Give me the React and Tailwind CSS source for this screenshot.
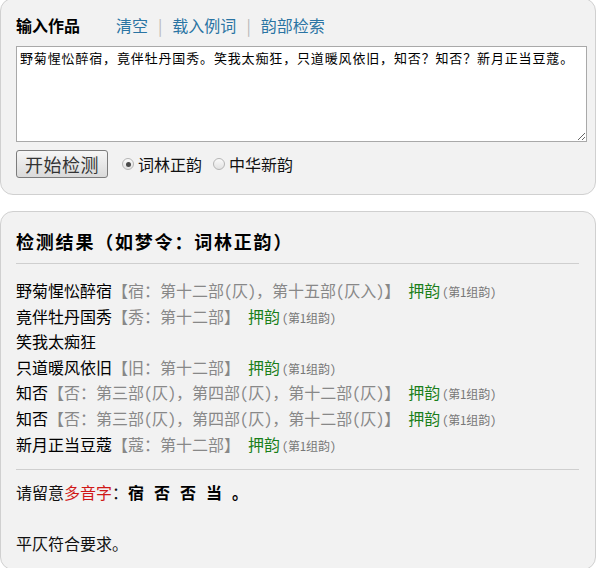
const rows = [
  { line: "野菊惺忪醉宿", note: "宿：第十二部(仄)，第十五部(仄入)", rhyme: true },
  { line: "竟伴牡丹国秀", note: "秀：第十二部", rhyme: true },
  { line: "笑我太痴狂" },
  { line: "只道暖风依旧", note: "旧：第十二部", rhyme: true },
  { line: "知否", note: "否：第三部(仄)，第四部(仄)，第十二部(仄)", rhyme: true },
  { line: "知否", note: "否：第三部(仄)，第四部(仄)，第十二部(仄)", rhyme: true },
  { line: "新月正当豆蔻", note: "蔻：第十二部", rhyme: true },
];

const poem =
  "野菊惺忪醉宿，竟伴牡丹国秀。笑我太痴狂，只道暖风依旧，知否？知否？新月正当豆蔻。";

// ASCII parens get half-width glyphs, the rest keeps full-width punctuation
const Half = ({ text }) =>
  text.split(/([()])/).map((part, i) =>
    part === "(" || part === ")" ? (
      <span key={i} className="[font-feature-settings:'hwid']">
        {part}
      </span>
    ) : (
      part
    )
  );

const Radio = ({ checked, label }) => (
  <label className="flex items-center gap-[4px]">
    <span className="w-[12px] h-[12px] rounded-full border border-[#b5b5b5] bg-gradient-to-b from-[#fafafa] to-[#e2e2e2] flex items-center justify-center">
      {checked && <span className="w-[5px] h-[5px] rounded-full bg-[#4a4a4a]"></span>}
    </span>
    <span className="text-[16px] text-[#111]">{label}</span>
  </label>
);

const App = () => {
  return (
    <div className="bg-white min-h-[568px] overflow-hidden pr-[1px] text-[#111] font-['Noto_Sans_CJK_SC',sans-serif]">
      <div className="-mt-[2px] bg-[#f2f2f2] border border-[#d0d0d0] rounded-[13px] px-[15px] pt-[14px] pb-[16px]">
        <div className="flex items-center h-[24px] text-[16px]">
          <span className="font-bold text-black">输入作品</span>
          <a className="ml-[36px] text-[#2a74a3]">清空</a>
          <span className="mx-[10px] text-[#b8b8b8]">|</span>
          <a className="text-[#2a74a3]">载入例词</a>
          <span className="mx-[10px] text-[#b8b8b8]">|</span>
          <a className="text-[#2a74a3]">韵部检索</a>
        </div>
        <textarea
          className="block mt-[9px] w-[571px] h-[96px] bg-white border border-[#a9a9a9] px-[3px] py-[2px] text-[13px] leading-[18px] tracking-[0.85px] text-black outline-none"
          defaultValue={poem}
        />
        <div className="flex items-center mt-[8px]">
          <button className="h-[28px] w-[92px] border border-[#7c7c7c] rounded-[3px] bg-gradient-to-b from-[#f6f6f6] to-[#dadada] text-[18px] text-[#333] tracking-[0.5px]">
            开始检测
          </button>
          <div className="flex items-center ml-[14px] gap-[11px]">
            <Radio checked label="词林正韵" />
            <Radio label="中华新韵" />
          </div>
        </div>
      </div>

      <div className="mt-[16px] bg-[#f2f2f2] border border-[#d0d0d0] rounded-[13px] px-[15px] pt-[15px] pb-[12px]">
        <h2 className="text-[18px] leading-[28px] font-bold text-black tracking-[1.8px]">
          检测结果（如梦令：词林正韵）
        </h2>
        <div className="mt-[8px] mr-[1px] h-[1px] bg-[#cfcfcf]"></div>
        <div className="mt-[14px] text-[16px] leading-[1.6]">
          {rows.map((r, i) => (
            <div key={i} className="flex items-baseline whitespace-nowrap">
              <span className="text-black">{r.line}</span>
              {r.note && (
                <span className="text-[#888]">
                  【<Half text={r.note} />】
                </span>
              )}
              {r.rhyme && (
                <>
                  <span className="ml-[8px] text-[#1a7f1a]">押韵</span>
                  <span className="ml-[2px] text-[12px] text-[#777] [font-feature-settings:'hwid']">
                    (第1组韵)
                  </span>
                </>
              )}
            </div>
          ))}
        </div>
        <div className="mt-[12px] mr-[1px] h-[1px] bg-[#cfcfcf]"></div>
        <div className="mt-[10px] text-[16px] leading-[1.6]">
          <div className="flex items-baseline">
            <span>请留意</span>
            <span className="text-[#d01818]">多音字</span>
            <span>：</span>
            {["宿", "否", "否", "当", "。"].map((c, i) => (
              <b key={i} className="mr-[10px] text-black">
                {c}
              </b>
            ))}
          </div>
          <div className="h-[25.6px]"></div>
          <div>平仄符合要求。</div>
        </div>
      </div>
    </div>
  );
};

export default App;
